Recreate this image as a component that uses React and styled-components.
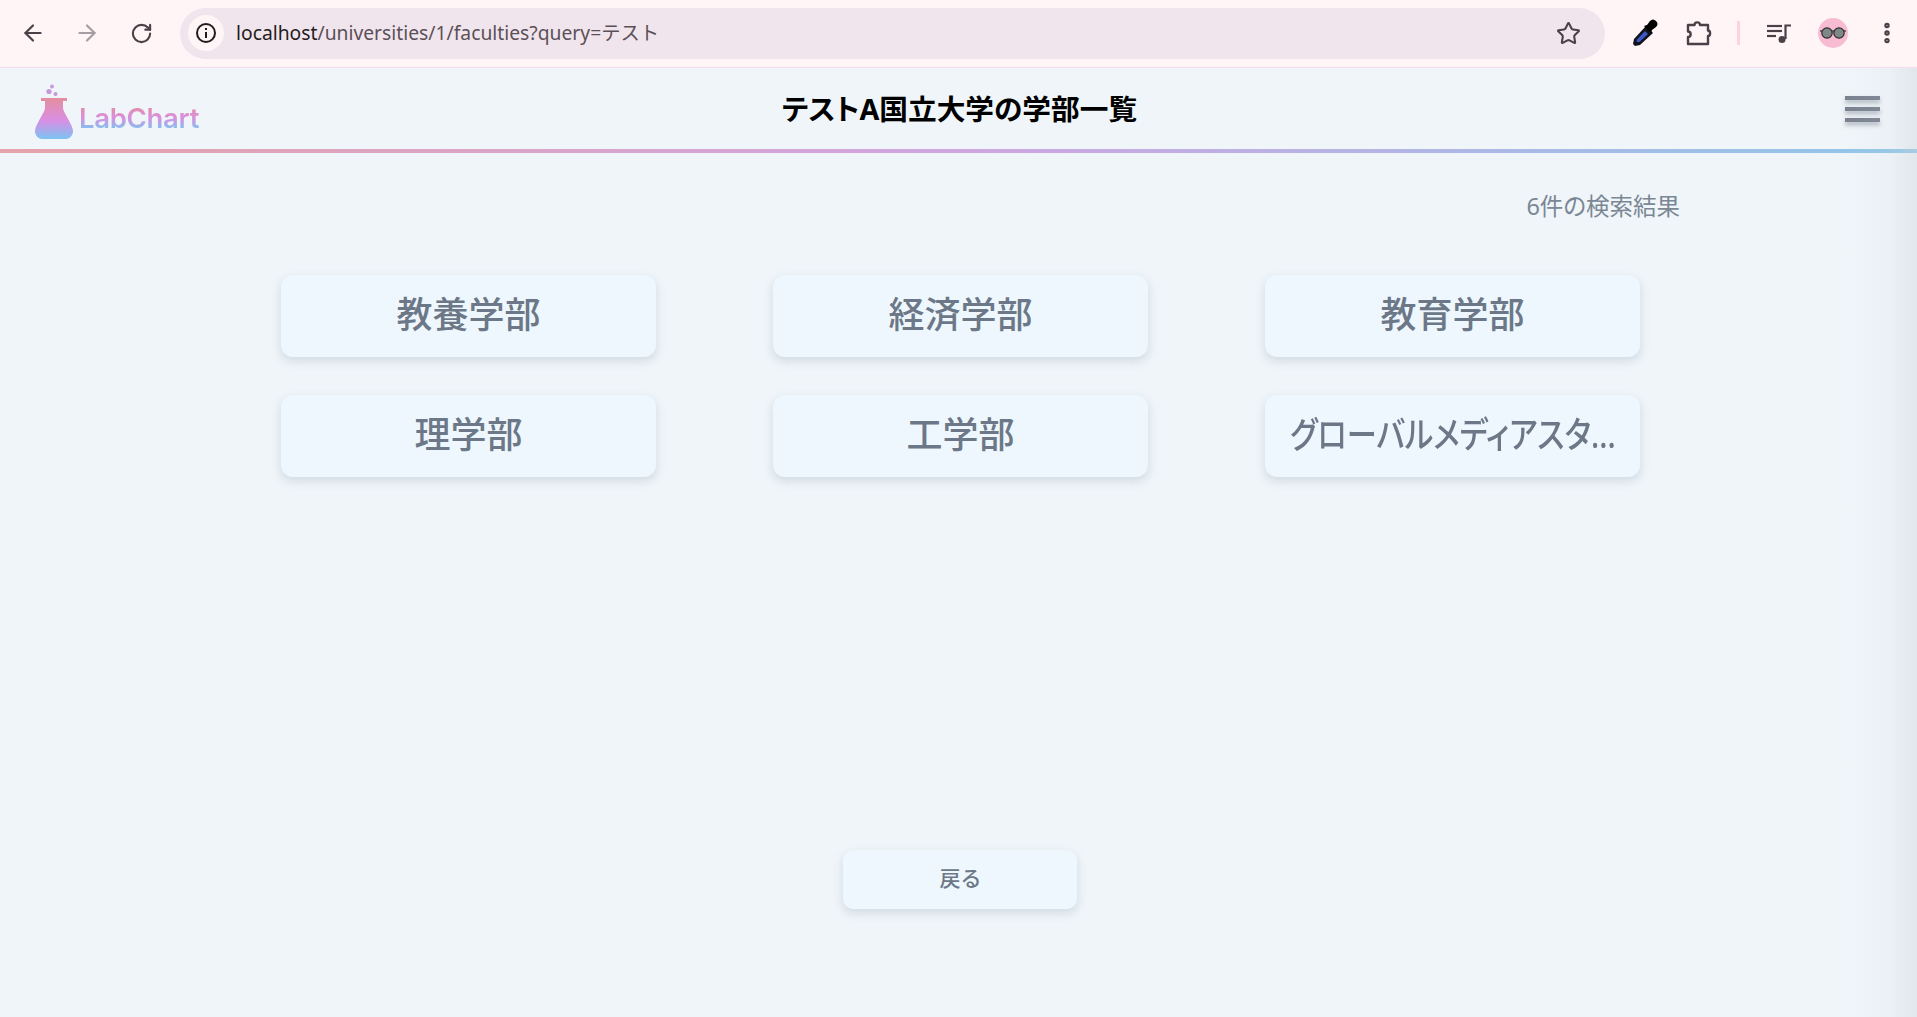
import React from "react";
import styled, { createGlobalStyle } from "styled-components";
import { ArrowLeft, ArrowRight, RotateCw, Star, EllipsisVertical } from "lucide-react";

const GlobalStyle = createGlobalStyle`
	html, body {
		margin: 0;
		padding: 0;
		background: #eff5f9;
		overflow: hidden;
	}
	* {
		box-sizing: border-box;
	}
`;

const FONT = `"Noto Sans", "Noto Sans CJK JP", sans-serif`;

const Page = styled.div`
	position: relative;
	display: flex;
	flex-direction: column;
	height: 1017px;
	font-family: ${FONT};
	background: #eff5f9;
`;

const EdgeShade = styled.div`
	position: absolute;
	top: 68px;
	right: 0;
	bottom: 0;
	width: 70px;
	background: linear-gradient(to right, rgba(205, 212, 218, 0), rgba(205, 212, 218, 0.12) 60%, rgba(205, 212, 218, 0.42));
	pointer-events: none;
`;

const BrowserBar = styled.div`
	display: flex;
	align-items: center;
	height: 68px;
	flex: none;
	padding-bottom: 1px;
	background: #fff5f7;
	border-bottom: 1px solid #f3dcec;
	color: #4c3f47;
`;

const NavButton = styled.div`
	display: flex;
	align-items: center;
	justify-content: center;
	width: 54px;
	height: 54px;
	flex: none;
	color: ${(props) => (props.$disabled ? "#a59da1" : "#4c3f47")};
`;

const NavGroup = styled.div`
	display: flex;
	align-items: center;
	padding-left: 6px;
	width: 180px;
	flex: none;
`;

const Omnibox = styled.div`
	display: flex;
	align-items: center;
	width: 1425px;
	height: 51px;
	flex: none;
	padding: 0 0 0 8px;
	border-radius: 26px;
	background: #f1e5ed;
`;

const InfoBadge = styled.div`
	display: flex;
	align-items: center;
	justify-content: center;
	width: 36px;
	height: 36px;
	flex: none;
	border-radius: 50%;
	background: #fff5f7;
	color: #221c20;
`;

const Url = styled.div`
	margin-left: 12px;
	font-size: 19.3px;
	line-height: 26px;
	color: #5b5057;
	white-space: nowrap;
	flex: 1;
	b {
		font-weight: 400;
		color: #221c20;
	}
`;

const StarSlot = styled.div`
	display: flex;
	justify-content: center;
	width: 36px;
	margin-right: 19px;
	color: #4c3f47;
`;

const Extensions = styled.div`
	display: flex;
	align-items: center;
	flex: none;
	padding-left: 17px;
`;

const ExtSlot = styled.div`
	display: flex;
	align-items: center;
	justify-content: center;
	width: ${(props) => props.$w || 48}px;
	height: 48px;
	flex: none;
`;

const Divider = styled.div`
	width: 3px;
	height: 24px;
	background: #fbd3e4;
`;

const Header = styled.header`
	position: relative;
	display: flex;
	align-items: center;
	justify-content: center;
	height: 85px;
	flex: none;
	background: #eff5f9;
	border-bottom: 4px solid;
	border-image: linear-gradient(to right, #e5a3aa, #d0a5e2 50%, #8fc7e8) 1;
`;

const Logo = styled.div`
	position: absolute;
	left: 35px;
	top: 15px;
	display: flex;
	align-items: flex-end;
	gap: 6px;
`;

const LogoText = styled.span`
	font-family: Inter, "Noto Sans", sans-serif;
	font-size: 27.5px;
	font-weight: 600;
	line-height: 32px;
	letter-spacing: -0.3px;
	margin-bottom: 5px;
	background: linear-gradient(to bottom, #e58e9e 10%, #d98fe0 50%, #82c2f0 85%);
	-webkit-background-clip: text;
	background-clip: text;
	color: transparent;
`;

const Title = styled.h1`
	margin: 1px 0 0 2px;
	font-size: 28.7px;
	line-height: 40px;
	font-weight: 700;
	color: #000;
	font-feature-settings: "palt";
`;

const Hamburger = styled.div`
	position: absolute;
	right: 37px;
	top: 28px;
	display: flex;
	flex-direction: column;
	gap: 7.500px;
	width: 35px;
`;

const HamburgerBar = styled.span`
	display: block;
	height: 3.500px;
	background: #7a818f;
	box-shadow: 0 3px 4px rgba(100, 110, 125, 0.5);
`;

const Main = styled.main`
	flex: 1;
	padding: 0 277px 0 281px;
`;

const Count = styled.p`
	margin: 0 -40px 0 0;
	padding-top: 35px;
	height: 122px;
	font-size: 23.5px;
	line-height: 36px;
	text-align: right;
	color: #7b8794;
	font-feature-settings: "palt";
`;

const FacultyGrid = styled.div`
	display: grid;
	grid-template-columns: repeat(3, 375px);
	column-gap: 117px;
	row-gap: 38px;
`;

const FacultyCard = styled.a`
	display: flex;
	justify-content: center;
	height: 82px;
	border-radius: 12px;
	background: #eef7fd;
	box-shadow: 0 4px 10px rgba(120, 140, 160, 0.25);
	font-size: 36px;
	font-weight: 500;
	line-height: 79px;
	color: #6c7787;
	white-space: nowrap;
	font-feature-settings: "palt";
`;

// the long name runs in narrow glyphs in the reference
const FacultyName = styled.span`
	display: block;
	flex: none;
	transform: ${(props) => (props.$narrow ? "scaleX(0.84)" : "none")};
`;

const BackRow = styled.div`
	display: flex;
	justify-content: center;
	margin-top: 373px;
	padding-right: 2px;
`;

const BackButton = styled.button`
	width: 234px;
	height: 59px;
	padding: 0 0 6px 2px;
	border: none;
	border-radius: 10px;
	background: #eef7fd;
	box-shadow: 0 4px 10px rgba(120, 140, 160, 0.25);
	font-family: ${FONT};
	font-size: 21px;
	font-weight: 500;
	color: #6c7787;
`;

const faculties = ["教養学部", "経済学部", "教育学部", "理学部", "工学部", "グローバルメディアスタ..."];

function FlaskLogo() {
	return (
		<svg width="38" height="56" viewBox="0 0 38 56">
			<defs>
				<linearGradient id="flask" x1="0" y1="0" x2="0" y2="1">
					<stop offset="0" stopColor="#e58e9e" />
					<stop offset="0.55" stopColor="#d98fe4" />
					<stop offset="1" stopColor="#7cc3f2" />
				</linearGradient>
			</defs>
			<circle cx="17" cy="3.5" r="2" fill="#c79be0" />
			<circle cx="14" cy="8.5" r="2.6" fill="#c995dc" />
			<circle cx="20.5" cy="11" r="2" fill="#c995dc" />
			<path
				d="M6 15h26v3h-4v7c0 4 10 17 10 23 0 4-3 8-7 8H7c-4 0-7-4-7-8 0-6 10-19 10-23v-7H6z"
				fill="url(#flask)"
			/>
		</svg>
	);
}

function Dropper() {
	return (
		<svg width="28" height="28" viewBox="0 0 28 28">
			<path d="M1 25l1-5L14 7l7 7L8 26l-5 1z" fill="#12131a" />
			<path d="M4.500 23l.5-2.500L13 12l3 3-8.500 8z" fill="#3c57c6" />
			<path d="M12 7l3-1 3-4c2-2 4-2 6 0s2 4 0 6l-4 3-1 3z" fill="#000" />
		</svg>
	);
}

function PuzzleIcon() {
	return (
		<svg width="28" height="28" viewBox="0 0 28 28" fill="none" stroke="#4c3f47" strokeWidth="2.400" strokeLinejoin="round">
			<path d="M3 6h6.500c0-3.500 5.500-3.500 5.500 0H23v5.500c2.800 0 2.800 5.500 0 5.500v8H3v-7c3.500 0 3.500-5.500 0-5.500z" />
		</svg>
	);
}

function QueueMusic() {
	return (
		<svg width="26" height="26" viewBox="0 0 26 26" fill="none" stroke="#4c3f47" strokeWidth="2.200">
			<line x1="1" y1="6" x2="16" y2="6" />
			<line x1="1" y1="11" x2="16" y2="11" />
			<line x1="1" y1="16" x2="10" y2="16" />
			<path d="M19.500 19V5.500H25" />
			<circle cx="16" cy="19.500" r="3.500" fill="#4c3f47" stroke="none" />
		</svg>
	);
}

function Avatar() {
	return (
		<svg width="30" height="30" viewBox="0 0 30 30">
			<circle cx="15" cy="15" r="15" fill="#f8bcd2" />
			<line x1="2" y1="13" x2="28" y2="13" stroke="#3a3336" strokeWidth="1.200" />
			<circle cx="9" cy="15" r="5.200" fill="#7e8886" stroke="#2e2a2c" strokeWidth="1.200" />
			<circle cx="21" cy="15" r="5.200" fill="#7e8886" stroke="#2e2a2c" strokeWidth="1.200" />
		</svg>
	);
}

function InfoIcon() {
	return (
		<svg width="22" height="22" viewBox="0 0 22 22" fill="none" stroke="currentColor" strokeWidth="2">
			<circle cx="11" cy="11" r="9" />
			<line x1="11" y1="10" x2="11" y2="16" />
			<line x1="11" y1="6" x2="11" y2="8" />
		</svg>
	);
}

export default function App() {
	return (
		<Page>
			<GlobalStyle />
			<BrowserBar>
				<NavGroup>
					<NavButton>
						<ArrowLeft size={26} strokeWidth={2} />
					</NavButton>
					<NavButton $disabled>
						<ArrowRight size={26} strokeWidth={2} />
					</NavButton>
					<NavButton>
						<RotateCw size={23} strokeWidth={2.2} />
					</NavButton>
				</NavGroup>
				<Omnibox>
					<InfoBadge>
						<InfoIcon />
					</InfoBadge>
					<Url>
						<b>localhost</b>/universities/1/faculties?query=テスト
					</Url>
					<StarSlot>
						<Star size={25} strokeWidth={2} />
					</StarSlot>
				</Omnibox>
				<Extensions>
					<ExtSlot>
						<Dropper />
					</ExtSlot>
					<ExtSlot $w={58}>
						<PuzzleIcon />
					</ExtSlot>
					<ExtSlot $w={20}>
						<Divider />
					</ExtSlot>
					<ExtSlot $w={62}>
						<QueueMusic />
					</ExtSlot>
					<ExtSlot $w={46}>
						<Avatar />
					</ExtSlot>
					<ExtSlot $w={62}>
						<EllipsisVertical size={26} strokeWidth={3} />
					</ExtSlot>
				</Extensions>
			</BrowserBar>
			<Header>
				<Logo>
					<FlaskLogo />
					<LogoText>LabChart</LogoText>
				</Logo>
				<Title>テストA国立大学の学部一覧</Title>
				<Hamburger>
					<HamburgerBar />
					<HamburgerBar />
					<HamburgerBar />
				</Hamburger>
			</Header>
			<Main>
				<Count>6件の検索結果</Count>
				<FacultyGrid>
					{faculties.map((name) => (
						<FacultyCard key={name}>
							<FacultyName $narrow={name.length > 8}>{name}</FacultyName>
						</FacultyCard>
					))}
				</FacultyGrid>
				<BackRow>
					<BackButton>戻る</BackButton>
				</BackRow>
			</Main>
			<EdgeShade />
		</Page>
	);
}
